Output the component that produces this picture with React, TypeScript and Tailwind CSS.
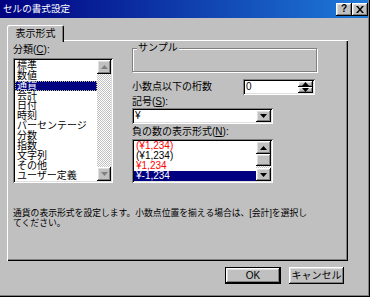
import React from 'react';

const raised =
  'bg-[#c0c0c0] shadow-[inset_-1px_-1px_0_#000000,inset_1px_1px_0_#ffffff,inset_-2px_-2px_0_#808080,inset_2px_2px_0_#dfdfdf]';
const sunken =
  'bg-white shadow-[inset_1px_1px_0_#808080,inset_-1px_-1px_0_#ffffff,inset_2px_2px_0_#000000,inset_-2px_-2px_0_#dfdfdf]';
const dither =
  'bg-[repeating-conic-gradient(#c0c0c0_0%_25%,#ffffff_0%_50%)] bg-[length:2px_2px]';

const categories = [
  '標準',
  '数値',
  '通貨',
  '会計',
  '日付',
  '時刻',
  'パーセンテージ',
  '分数',
  '指数',
  '文字列',
  'その他',
  'ユーザー定義',
];

const negatives = [
  { text: '(¥1,234)', red: true },
  { text: '(¥1,234)', red: false },
  { text: '¥1,234', red: true },
  { text: '¥-1,234', red: false, selected: true },
];

const Arrow = ({ up, gray }: { up?: boolean; gray?: boolean }) => (
  <svg width="7" height="4" viewBox="0 0 7 4">
    <polygon points={up ? '3.5,0 7,4 0,4' : '0,0 7,0 3.5,4'} fill={gray ? '#808080' : '#000000'} />
  </svg>
);

const ScrollBtn = ({ up, gray, h }: { up?: boolean; gray?: boolean; h: string }) => (
  <div className={`flex items-center justify-center ${raised} ${h}`}>
    <Arrow up={up} gray={gray} />
  </div>
);

export default function App() {
  return (
    <div className="w-[370px] h-[297px] bg-[#c0c0c0] font-['Liberation_Sans','Noto_Sans_CJK_JP',sans-serif] text-[10px] text-black shadow-[inset_-1px_-1px_0_#000000,inset_-2px_-2px_0_#808080] overflow-hidden select-none">
      {/* Title bar */}
      <div className="h-[18px] mr-[2px] flex items-center justify-between bg-[linear-gradient(90deg,#000080,#1e7ad8)]">
        <span className="pl-[3px] text-white text-[9.6px] leading-[12px]">セルの書式設定</span>
        <div className="flex">
          <div className={`w-[16px] h-[13px] flex items-center justify-center text-[10px] leading-none font-bold ${raised}`}>?</div>
          <div className={`w-[16px] h-[13px] flex items-center justify-center ${raised}`}>
            <svg width="8" height="7" viewBox="0 0 8 7">
              <path d="M0 0h2l2 2.5L6 0h2L5 3.5 8 7H6L4 4.5 2 7H0l3-3.5z" fill="#000" />
            </svg>
          </div>
        </div>
      </div>

      {/* Tabs */}
      <div className="pt-[7px]">
        <div className="relative z-10 -mb-[2px] ml-[7px] w-[57px] h-[17px] rounded-t-[2px] bg-[#c0c0c0] shadow-[inset_1px_1px_0_#ffffff,inset_-1px_0_0_#000000,inset_-2px_0_0_#808080] flex items-center justify-center leading-[10px]">
          表示形式
        </div>

        <div className="ml-[7px] w-[341px] h-[221px] pt-[3px] pl-[6px] bg-[#c0c0c0] shadow-[inset_1px_1px_0_#ffffff,inset_-1px_-1px_0_#000000,inset_-2px_-2px_0_#808080]">
          <div className="flex gap-[19px]">
            {/* Category */}
            <div className="w-[100px] pt-[2px]">
              <div className="h-[13px] leading-[10px]">
                分類(<u>C</u>):
              </div>
              <div className={`h-[125px] flex p-[2px] ${sunken}`}>
                <div className="flex-1 flex flex-col pt-[1px]">
                  {categories.map((c, i) => (
                    <div
                      key={c}
                      className={`h-[10px] leading-[10px] pl-[2px] whitespace-nowrap ${
                        i === 2 ? 'bg-[#000080] text-white outline-1 outline-dotted outline-[#c0c080] -outline-offset-1' : ''
                      }`}
                    >
                      {c}
                    </div>
                  ))}
                </div>
                <div className="w-[14px] flex flex-col">
                  <ScrollBtn up gray h="h-[14px]" />
                  <div className={`flex-1 ${dither}`} />
                  <ScrollBtn gray h="h-[14px]" />
                </div>
              </div>
            </div>

            {/* Right side */}
            <div className="w-[185px]">
              <fieldset className="h-[29px] border border-[#808080] shadow-[inset_1px_1px_0_#ffffff,1px_1px_0_#ffffff]">
                <legend className="ml-[4px] px-[1px] bg-[#c0c0c0] leading-[10px]">サンプル</legend>
              </fieldset>

              <div className="mt-[7px] h-[16px] flex items-center">
                <span className="w-[111px] leading-[10px]">小数点以下の桁数</span>
                <div className={`w-[72px] h-[16px] flex p-[2px] ${sunken}`}>
                  <span className="flex-1 pl-[1px] leading-[12px]">0</span>
                  <div className="w-[15px] flex flex-col">
                    <ScrollBtn up h="h-[6px]" />
                    <ScrollBtn h="h-[6px]" />
                  </div>
                </div>
              </div>

              <div className="mt-[2px] h-[11px] leading-[10px]">
                記号(<u>S</u>):
              </div>
              <div className={`w-[141px] h-[16px] flex p-[2px] ${sunken}`}>
                <span className="flex-1 pl-[1px] leading-[12px]">¥</span>
                <ScrollBtn h="h-[12px] w-[15px]" />
              </div>

              <div className="mt-[2px] h-[13px] leading-[12px]">
                負の数の表示形式(<u>N</u>):
              </div>
              <div className={`w-[141px] h-[44px] flex p-[2px] ${sunken}`}>
                <div className="flex-1 flex flex-col">
                  {negatives.map((n, i) => (
                    <div
                      key={i}
                      className={`h-[10px] leading-[10px] pl-[2px] ${
                        n.selected ? 'bg-[#000080] text-white' : n.red ? 'text-[#ff0000]' : ''
                      }`}
                    >
                      {n.text}
                    </div>
                  ))}
                </div>
                <div className="w-[15px] flex flex-col">
                  <ScrollBtn up h="h-[13px]" />
                  <div className={`h-[12px] ${raised}`} />
                  <div className={`flex-1 ${dither}`} />
                  <ScrollBtn h="h-[13px]" />
                </div>
              </div>
            </div>
          </div>

          <p className="mt-[25px] text-[8.8px] leading-[10px] whitespace-nowrap">
            通貨の表示形式を設定します。小数点位置を揃える場合は、[会計]を選択し
            <br />
            てください。
          </p>
        </div>

        {/* Buttons */}
        <div className="mt-[6px] ml-[7px] w-[341px] pr-[4px] flex justify-end gap-[8px]">
          <div className="w-[56px] h-[17px] border border-black">
            <div className={`h-full flex items-center justify-center leading-[10px] ${raised}`}>OK</div>
          </div>
          <div className={`w-[55px] h-[17px] flex items-center justify-center leading-[10px] ${raised}`}>
            キャンセル
          </div>
        </div>
      </div>
    </div>
  );
}
